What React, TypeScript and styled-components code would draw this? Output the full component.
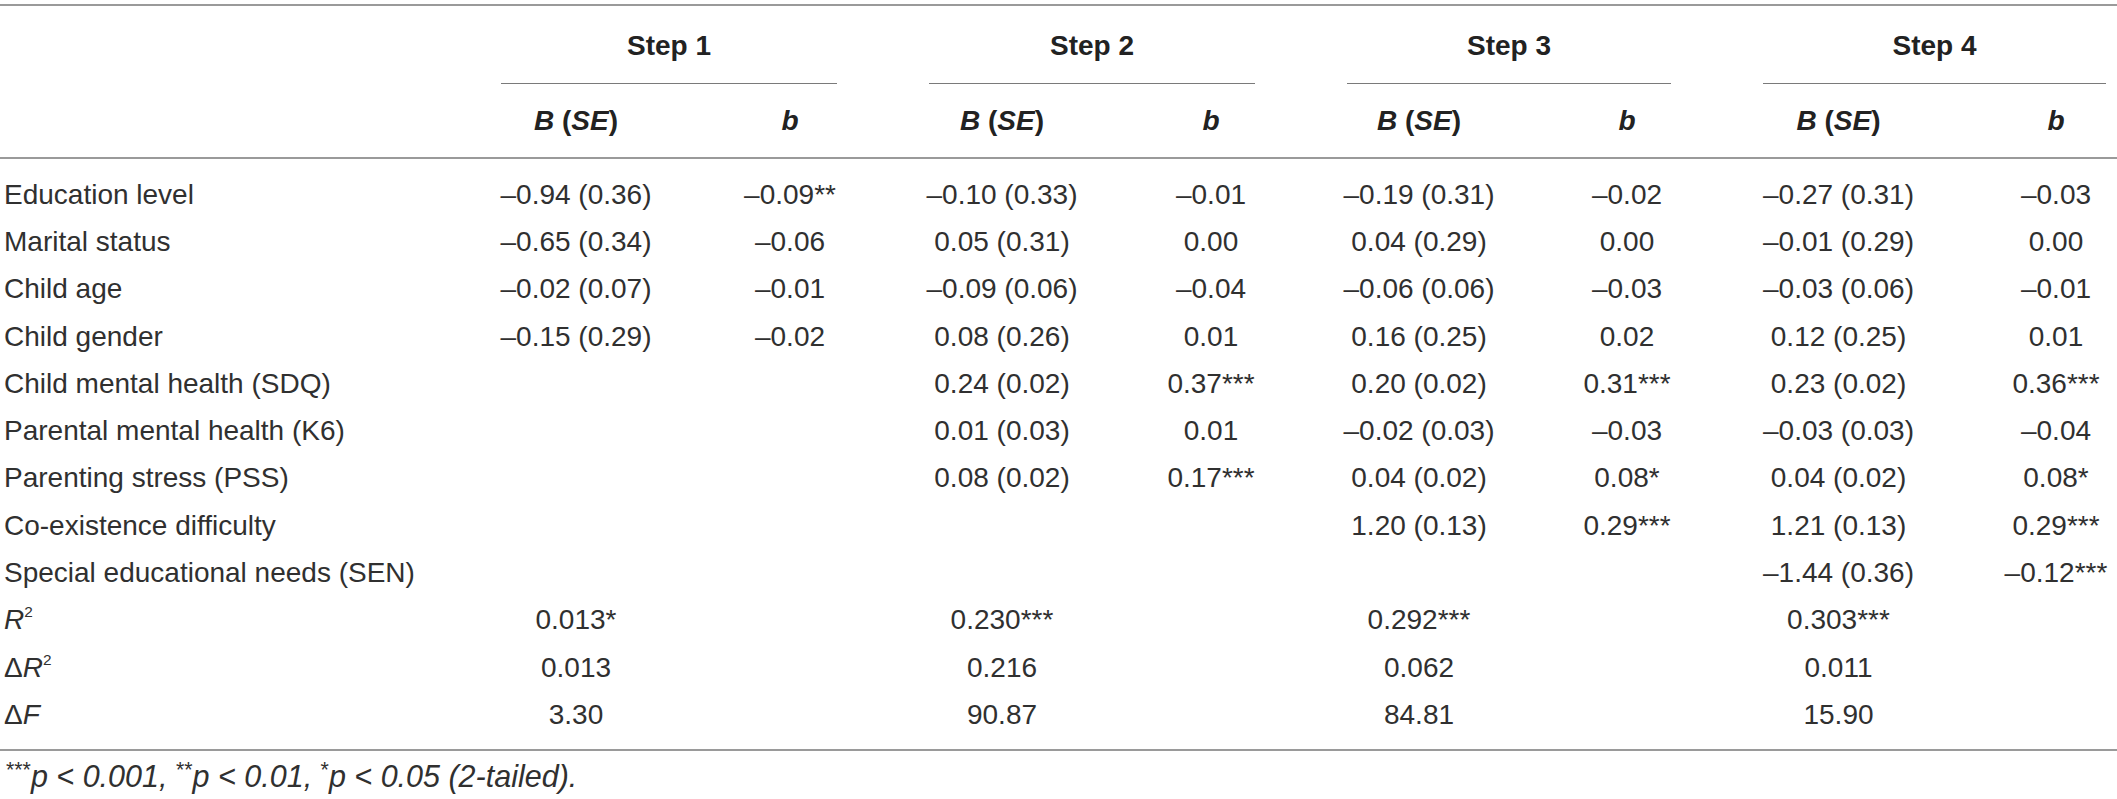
import React from "react";
import styled, { createGlobalStyle } from "styled-components";

const COLUMNS = "469px 214px 214px 210px 208px 208px 208px 215px 220px";

const GlobalStyle = createGlobalStyle`
  html, body {
    margin: 0;
    padding: 0;
    background: #fff;
    overflow: hidden;
  }
  body {
    font-family: "Liberation Sans", Arial, Helvetica, sans-serif;
    color: #303030;
  }
`;

const Page = styled.div`
  width: 2117px;
  height: 799px;
  overflow: hidden;
  padding-top: 4px;
  box-sizing: border-box;
`;

const Table = styled.div`
  width: 2166px;
  border-top: 2px solid #9a9a9a;
  border-bottom: 2px solid #9a9a9a;
  font-size: 28px;
`;

const Row = styled.div<{ $height: number }>`
  display: grid;
  grid-template-columns: ${COLUMNS};
  height: ${(p) => p.$height}px;
  align-items: center;
`;

const HeaderRow = styled(Row)`
  border-bottom: 2px solid #9a9a9a;
  font-weight: bold;
  color: #222;
`;

const StepCell = styled.div`
  grid-column: span 2;
  align-self: stretch;
  margin: 0 60px 0 32px;
  border-bottom: 1px solid #7a7a7a;
  display: flex;
  align-items: center;
  justify-content: center;
  font-weight: bold;
  color: #222;
  padding-top: 2px;
`;

const Body = styled.div`
  padding: 12px 0 10px;
`;

const Label = styled.div`
  padding-left: 4px;
  white-space: nowrap;
`;

const Cell = styled.div`
  text-align: center;
  white-space: nowrap;
`;

const Sup = styled.sup`
  font-size: 0.55em;
  line-height: 0;
  vertical-align: 0.75em;
`;

const Footnote = styled.p`
  margin: 8px 0 0;
  padding-left: 6px;
  font-size: 30.5px;
  font-style: italic;
  line-height: 34px;
`;

const FootStar = styled.span`
  font-style: normal;
  font-size: 0.7em;
  vertical-align: 0.45em;
  line-height: 0;
`;

type DataRow = { label: React.ReactNode; values: string[] };

const rows: DataRow[] = [
  { label: "Education level", values: ["–0.94 (0.36)", "–0.09**", "–0.10 (0.33)", "–0.01", "–0.19 (0.31)", "–0.02", "–0.27 (0.31)", "–0.03"] },
  { label: "Marital status", values: ["–0.65 (0.34)", "–0.06", "0.05 (0.31)", "0.00", "0.04 (0.29)", "0.00", "–0.01 (0.29)", "0.00"] },
  { label: "Child age", values: ["–0.02 (0.07)", "–0.01", "–0.09 (0.06)", "–0.04", "–0.06 (0.06)", "–0.03", "–0.03 (0.06)", "–0.01"] },
  { label: "Child gender", values: ["–0.15 (0.29)", "–0.02", "0.08 (0.26)", "0.01", "0.16 (0.25)", "0.02", "0.12 (0.25)", "0.01"] },
  { label: "Child mental health (SDQ)", values: ["", "", "0.24 (0.02)", "0.37***", "0.20 (0.02)", "0.31***", "0.23 (0.02)", "0.36***"] },
  { label: "Parental mental health (K6)", values: ["", "", "0.01 (0.03)", "0.01", "–0.02 (0.03)", "–0.03", "–0.03 (0.03)", "–0.04"] },
  { label: "Parenting stress (PSS)", values: ["", "", "0.08 (0.02)", "0.17***", "0.04 (0.02)", "0.08*", "0.04 (0.02)", "0.08*"] },
  { label: "Co-existence difficulty", values: ["", "", "", "", "1.20 (0.13)", "0.29***", "1.21 (0.13)", "0.29***"] },
  { label: "Special educational needs (SEN)", values: ["", "", "", "", "", "", "–1.44 (0.36)", "–0.12***"] },
  {
    label: (
      <>
        <i>R</i>
        <Sup>2</Sup>
      </>
    ),
    values: ["0.013*", "", "0.230***", "", "0.292***", "", "0.303***", ""],
  },
  {
    label: (
      <>
        Δ<i>R</i>
        <Sup>2</Sup>
      </>
    ),
    values: ["0.013", "", "0.216", "", "0.062", "", "0.011", ""],
  },
  {
    label: (
      <>
        Δ<i>F</i>
      </>
    ),
    values: ["3.30", "", "90.87", "", "84.81", "", "15.90", ""],
  },
];

const steps = ["Step 1", "Step 2", "Step 3", "Step 4"];

export default function App() {
  return (
    <Page>
      <GlobalStyle />
      <Table>
        <Row $height={78}>
          <div />
          {steps.map((s) => (
            <StepCell key={s}>{s}</StepCell>
          ))}
        </Row>
        <HeaderRow $height={73}>
          <div />
          {steps.map((s) => (
            <React.Fragment key={s}>
              <Cell>
                <i>B</i> (<i>SE</i>)
              </Cell>
              <Cell>
                <i>b</i>
              </Cell>
            </React.Fragment>
          ))}
        </HeaderRow>
        <Body>
          {rows.map((r, i) => (
            <Row $height={47.3} key={i}>
              <Label>{r.label}</Label>
              {r.values.map((v, j) => (
                <Cell key={j}>{v}</Cell>
              ))}
            </Row>
          ))}
        </Body>
      </Table>
      <Footnote>
        <FootStar>***</FootStar>p &lt; 0.001, <FootStar>**</FootStar>p &lt; 0.01, <FootStar>*</FootStar>p &lt; 0.05 (2-tailed).
      </Footnote>
    </Page>
  );
}
